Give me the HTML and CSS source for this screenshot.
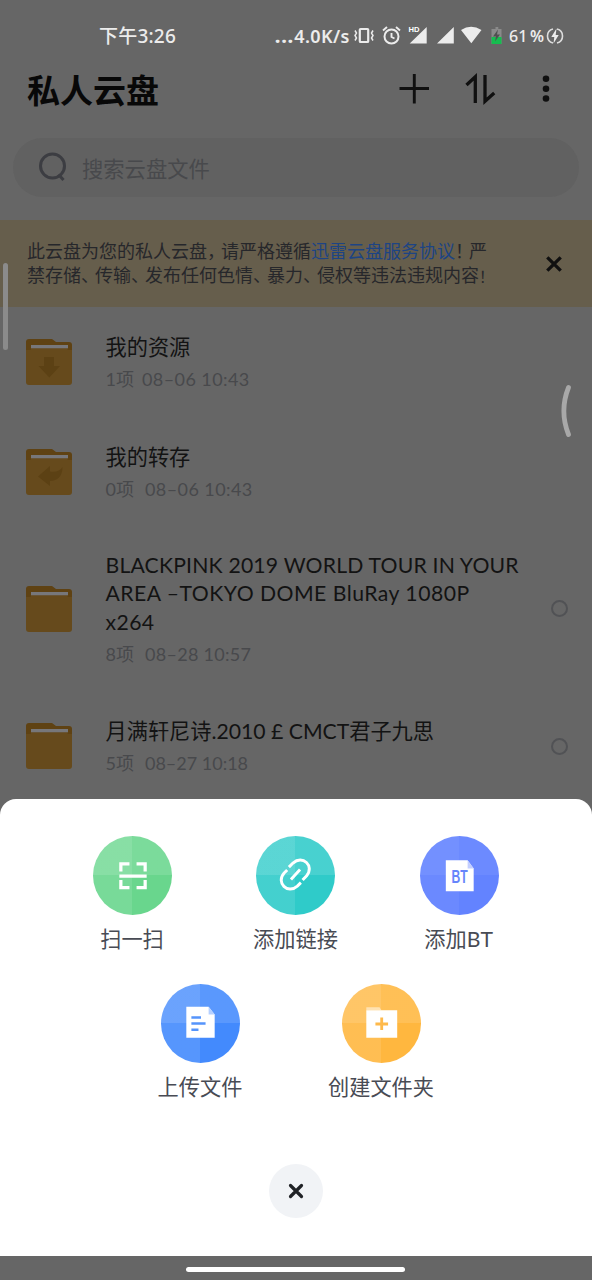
FILE: index.html
```html
<!DOCTYPE html>
<html lang="zh-CN">
<head>
<meta charset="utf-8">
<title>私人云盘</title>
<link rel="stylesheet" href="styles.css">
</head>
<body>
<svg class="defs" width="0" height="0">
  <symbol id="folder" viewBox="0 0 48 48">
    <path d="M1 4a3 3 0 0 1 3-3h23l4 3h13a3 3 0 0 1 3 3v36H1z" fill="#5f4213"/>
    <path d="M1 10.500h46V44a3 3 0 0 1-3 3H4a3 3 0 0 1-3-3z" fill="#664a1c"/>
    <path d="M1 9h5v3H1zM42.500 9H47v3h-4.500z" fill="#5f4213"/>
    <rect x="6" y="7" width="37" height="3.300" fill="#77777a"/>
  </symbol>
</svg>
<div class="screen">
  <div class="status">
    <span class="clock">下午3:26</span>
    <span class="speed"><b class="dots">...</b>4.0K/s</span>
    <svg class="status-icons" width="152" height="24" viewBox="352 24 152 24" fill="none" stroke="#ececec">
      <rect x="359.800" y="29" width="8.400" height="13" rx=".8" stroke-width="2.200"/>
      <path d="M355 30.500l1.500 2.500-1.500 2.500 1.500 2.500-1.500 2.500M373 30.500l-1.500 2.500 1.500 2.500-1.500 2.500 1.500 2.500" stroke-width="1.500"/>
      <circle cx="391.500" cy="36.500" r="7" stroke-width="2"/>
      <path d="M391.500 33v4l3 1.500M383 30.500l4-3.500M400 30.500l-4-3.500" stroke-width="1.900"/>
      <g fill="#ececec" stroke="none">
        <path d="M426.700 27v16.500h-17zM453.800 27v16.500H437zM461 30q10-6.500 20.500 0L471.300 43.300z"/>
        <path d="M408 25h12v8h-12z" fill="#666"/>
        <text x="408.600" y="32" class="hd" textLength="11" lengthAdjust="spacingAndGlyphs">HD</text>
        <path d="M493.500 29h2v-2h2.800v2h3.200v15h-10V29z" fill="#8a8a8a"/>
        <path d="M491.500 37h10v7h-10z" fill="#15bd4f"/>
        <path d="M498 29.500l-5 7h3l-1 5 5-7h-3z" fill="#505050"/>
      </g>
    </svg>
    <span class="level">61</span><span class="percent">%</span>
    <svg class="charge" width="18" height="18" viewBox="0 0 18 18">
      <path d="M7 2a7.200 7.200 0 0 0 0 14M11 2a7.200 7.200 0 0 1 0 14" fill="none" stroke="#ddd" stroke-width="1.600"/>
      <path d="M10.500 1.500L5.300 10h3L7.500 16.500 12.700 8h-3z" fill="#ececec"/>
    </svg>
  </div>

  <div class="header">
    <h1 class="heading">私人云盘</h1>
    <svg width="160" height="34" viewBox="396 72 160 34" fill="none" stroke="#101010">
      <path d="M399.500 88.500h29.500M414.300 74v29.500" stroke-width="2.900"/>
      <path d="M466.500 85l8.800-8.300V103M485 75v26.300l9.200-8.300" stroke-width="3.300"/>
      <g fill="#101010" stroke="none"><circle cx="546" cy="78.800" r="3.300"/><circle cx="546" cy="88.700" r="3.300"/><circle cx="546" cy="98.500" r="3.300"/></g>
    </svg>
  </div>

  <div class="search">
    <svg width="30" height="30" viewBox="0 0 30 30" fill="none" stroke="#3c3d42" stroke-width="3">
      <circle cx="14.500" cy="14" r="12"/><path d="M20.500 22.500l5 5.500"/>
    </svg>
    <span>搜索云盘文件</span>
  </div>

  <div class="notice">
    <p class="notice-text">此云盘为您的私人云盘<i>，</i>请严格遵循<a class="link">迅雷云盘服务协议</a><i>！</i>严<br>禁存储<i>、</i>传输<i>、</i>发布任何色情<i>、</i>暴力<i>、</i>侵权等违法违规内容<span class="last">！</span></p>
    <svg width="18" height="18" viewBox="0 0 18 18" stroke="#101010" stroke-width="3.300"><path d="M2.300 2.300l13.400 13.400M15.700 2.300l-13.400 13.400"/></svg>
  </div>

  <div class="row">
    <div class="folder">
      <svg width="48" height="48"><use href="#folder"/><path d="M19 19h10v9h6L24.300 39.500 13.500 28H19z" fill="#5c4114"/></svg>
    </div>
    <div class="info"><div class="name">我的资源</div><div class="meta first"><span class="count">1项</span><span class="d1">08–06 10:43</span></div></div>
  </div>
  <div class="row">
    <div class="folder">
      <svg width="48" height="48"><use href="#folder"/><path d="M13 28.500L25 18v5.500c6 1 10.500-1 12.500-4.500 0 9-5 14-12.500 14v5z" fill="#5c4114"/></svg>
    </div>
    <div class="info"><div class="name">我的转存</div><div class="meta"><span class="count">0项</span><span class="d2">08–06 10:43</span></div></div>
  </div>
  <div class="row tall">
    <div class="folder"><svg width="48" height="48"><use href="#folder"/></svg></div>
    <div class="info"><div class="name"><span class="l1">BLACKPINK 2019 WORLD TOUR IN YOUR</span><br><span class="l2">AREA –TOKYO DOME BluRay 1080P</span><br><span class="l3">x264</span></div><div class="meta"><span class="count">8项</span><span class="d3">08–28 10:57</span></div></div>
    <span class="radio"></span>
  </div>
  <div class="row">
    <div class="folder"><svg width="48" height="48"><use href="#folder"/></svg></div>
    <div class="info"><div class="name">月满轩尼诗<span class="l4">.2010 £ CMCT</span>君子九思</div><div class="meta"><span class="count">5项</span><span class="d4">08–27 10:18</span></div></div>
    <span class="radio"></span>
  </div>

  <span class="edge-handle"></span>
  <svg class="edge-arc" width="14" height="56" viewBox="0 0 14 56"><path d="M9.500 4.500Q.2 28 9.500 51.500" fill="none" stroke="#a8a8a8" stroke-width="4.800" stroke-linecap="round"/></svg>

  <div class="sheet">
    <div class="actions">
      <div class="action">
        <svg class="disc green" viewBox="0 0 78 78" fill="none" stroke="#fff" stroke-width="3.200"><path d="M27.500 35v-7.500H36M43 27.500h8.500V35M27.500 43.500V51H36M43 51h8.500v-7.500M26 39.500h27"/></svg>
        <span>扫一扫</span>
      </div>
      <div class="action">
        <svg class="disc teal" viewBox="0 0 78 78" fill="none" stroke="#fff" stroke-width="2.900">
          <path d="M32.500 30.700l4-4c9.500-8.500 21.500 3 13.500 12.500L46 43.500M30.800 33.500l-3 3c-8.500 9.500 3.500 21.500 13 13l3.500-3.500M34.500 43l9-10"/>
        </svg>
        <span>添加链接</span>
      </div>
      <div class="action">
        <svg class="disc indigo" viewBox="0 0 78 78"><path d="M25.500 24h21.500l6 8v22.500H25.500z" fill="#fff"/><path d="M47 24l6 8h-6z" fill="#c4cfff"/><text x="31" y="46.800" class="bt" textLength="16" lengthAdjust="spacingAndGlyphs">BT</text></svg>
        <span>添加<b class="latin">BT</b></span>
      </div>
    </div>
    <div class="actions second">
      <div class="action">
        <svg class="disc blue" viewBox="0 0 78 78"><path d="M25 22.500h22l6 7.500v23H25z" fill="#fff"/><path d="M47 22.500l6 7.500h-6z" fill="#b5d0ff"/><path d="M30 33h9.500M30 39h14M30 45.200h7" stroke="#5594fb" stroke-width="2.500"/></svg>
        <span>上传文件</span>
      </div>
      <div class="action">
        <svg class="disc orange" viewBox="0 0 78 78"><path d="M24 23h13l2 3H24z" fill="#ffe2b2"/><path d="M24 26h30.500v27H24z" fill="#fff"/><path d="M33 39.500h12.500M39.200 33v12.500" stroke="#feb94b" stroke-width="2.800"/></svg>
        <span>创建文件夹</span>
      </div>
    </div>
    <div class="close"><svg width="16" height="16" viewBox="0 0 16 16" stroke="#202226" stroke-width="3.200" stroke-linecap="round"><path d="M2.500 2.500l11 11M13.500 2.500l-11 11"/></svg></div>
  </div>
  <div class="navbar"><span class="pill"></span></div>
</div>
</body>
</html>
```
FILE: styles.css
```css
* { box-sizing: border-box; }
body { margin: 0; }
.defs { position: absolute; }
svg { display: block; flex: none; }
.screen {
  position: relative;
  width: 592px;
  height: 1280px;
  overflow: hidden;
  background: #666;
  color: #131313;
  font-family: Lato, "Noto Sans CJK SC", sans-serif;
  white-space: nowrap;
}
.status {
  display: flex;
  align-items: center;
  height: 60px;
  padding: 12px 0 0 99px;
  color: #ececec;
  font: 500 19px/24px "Noto Sans", "Noto Sans CJK SC", sans-serif;
}
.clock { width: 176px; letter-spacing: .2px; }
.speed { width: 77px; font-size: 18px; font-weight: 600; letter-spacing: .4px; }
.dots { letter-spacing: 1.200px; }
.hd { font: 700 8px "Liberation Sans", sans-serif; fill: #fff; }
.level { width: 21px; margin-left: 5px; font-size: 16px; }
.percent { width: 16px; font-size: 16px; font-weight: 600; }
.header {
  display: flex;
  align-items: center;
  justify-content: space-between;
  height: 60px;
  padding: 0 36px 2px 27px;
}
.heading { margin: 0; font: 700 33px/48px "Noto Sans CJK SC", sans-serif; color: #080808; }
.search {
  display: flex;
  align-items: center;
  gap: 14px;
  height: 59px;
  margin: 18px 13px 23px;
  padding: 0 0 1px 25px;
  border-radius: 30px;
  background: #616161;
  color: #48494c;
  font-size: 21.300px;
}
.notice {
  display: flex;
  align-items: center;
  justify-content: space-between;
  height: 87px;
  padding: 0 29px 0 27px;
  background: #665e4c;
}
.notice-text { margin: 0 0 1px; font: 400 18px/24px "Noto Sans CJK SC", sans-serif; color: #26272b; }
.notice-text i { font-style: normal; letter-spacing: -4px; }
.notice-text .last { font-size: 15px; }
.link { color: #1d4484; }
.row { display: flex; align-items: center; height: 110px; padding: 0 24.500px 0 25px; }
.tall { height: 164px; padding-bottom: 1px; }
.folder { width: 80.500px; }
.info { flex: 1; }
.name { font-size: 21.200px; line-height: 28.300px; }
.meta { display: flex; margin-top: 6px; font-size: 18px; line-height: 24px; color: #48494c; gap: 11px; }
.first { gap: 8px; }
.d1, .d2 { letter-spacing: .42px; }
.d3 { letter-spacing: .3px; }
.l1 { letter-spacing: .19px; }
.l2 { letter-spacing: .47px; }
.l3 { letter-spacing: .4px; }
.radio { width: 17px; height: 17px; border: 2px solid #515255; border-radius: 50%; }
.edge-handle {
  position: absolute;
  left: 3px;
  top: 263px;
  width: 5px;
  height: 87px;
  border-radius: 3px;
  background: #8b8b8b;
}
.edge-arc { position: absolute; left: 559px; top: 383px; }
.sheet {
  position: absolute;
  left: 0;
  right: 0;
  top: 799px;
  height: 457px;
  padding-top: 37px;
  border-radius: 16px 16px 0 0;
  background: #fff;
}
.actions { display: flex; justify-content: center; height: 147.500px; padding-right: 1px; }
.action {
  display: flex;
  flex-direction: column;
  align-items: center;
  gap: 9px;
  width: 163.500px;
  color: #484b54;
  font-size: 21.200px;
  line-height: 30px;
}
.second { padding-right: 11px; }
.second .action { width: 181px; }
.disc {
  width: 79px;
  height: 79px;
  border-radius: 50%;
  background-image: linear-gradient(90deg, rgba(255,255,255,.1) 50%, transparent 50%), linear-gradient(rgba(255,255,255,.12) 50%, transparent 50%);
}
.green { background-color: #69d68d; }
.teal { background-color: #2fcbc9; }
.indigo {
  background-color: #6383ff;
  background-image: linear-gradient(90deg, rgba(255,255,255,.05) 50%, transparent 50%), linear-gradient(rgba(255,255,255,.06) 50%, transparent 50%);
}
.blue { background-color: #438afd; }
.orange { background-color: #ffb73f; }
.bt { font: 700 19px "Liberation Sans", sans-serif; fill: #6685fb; }
.latin { font-weight: 400; letter-spacing: .6px; }
.close {
  display: flex;
  align-items: center;
  justify-content: center;
  width: 54px;
  height: 54px;
  margin: 33px auto 0;
  border-radius: 50%;
  background: #f1f3f6;
}
.navbar {
  position: absolute;
  left: 0;
  right: 0;
  bottom: 0;
  height: 24px;
  padding: 11px 1px 0 0;
  background: #666;
}
.pill { display: block; width: 219px; height: 5px; margin: 0 auto; border-radius: 3px; background: #fff; }
```
